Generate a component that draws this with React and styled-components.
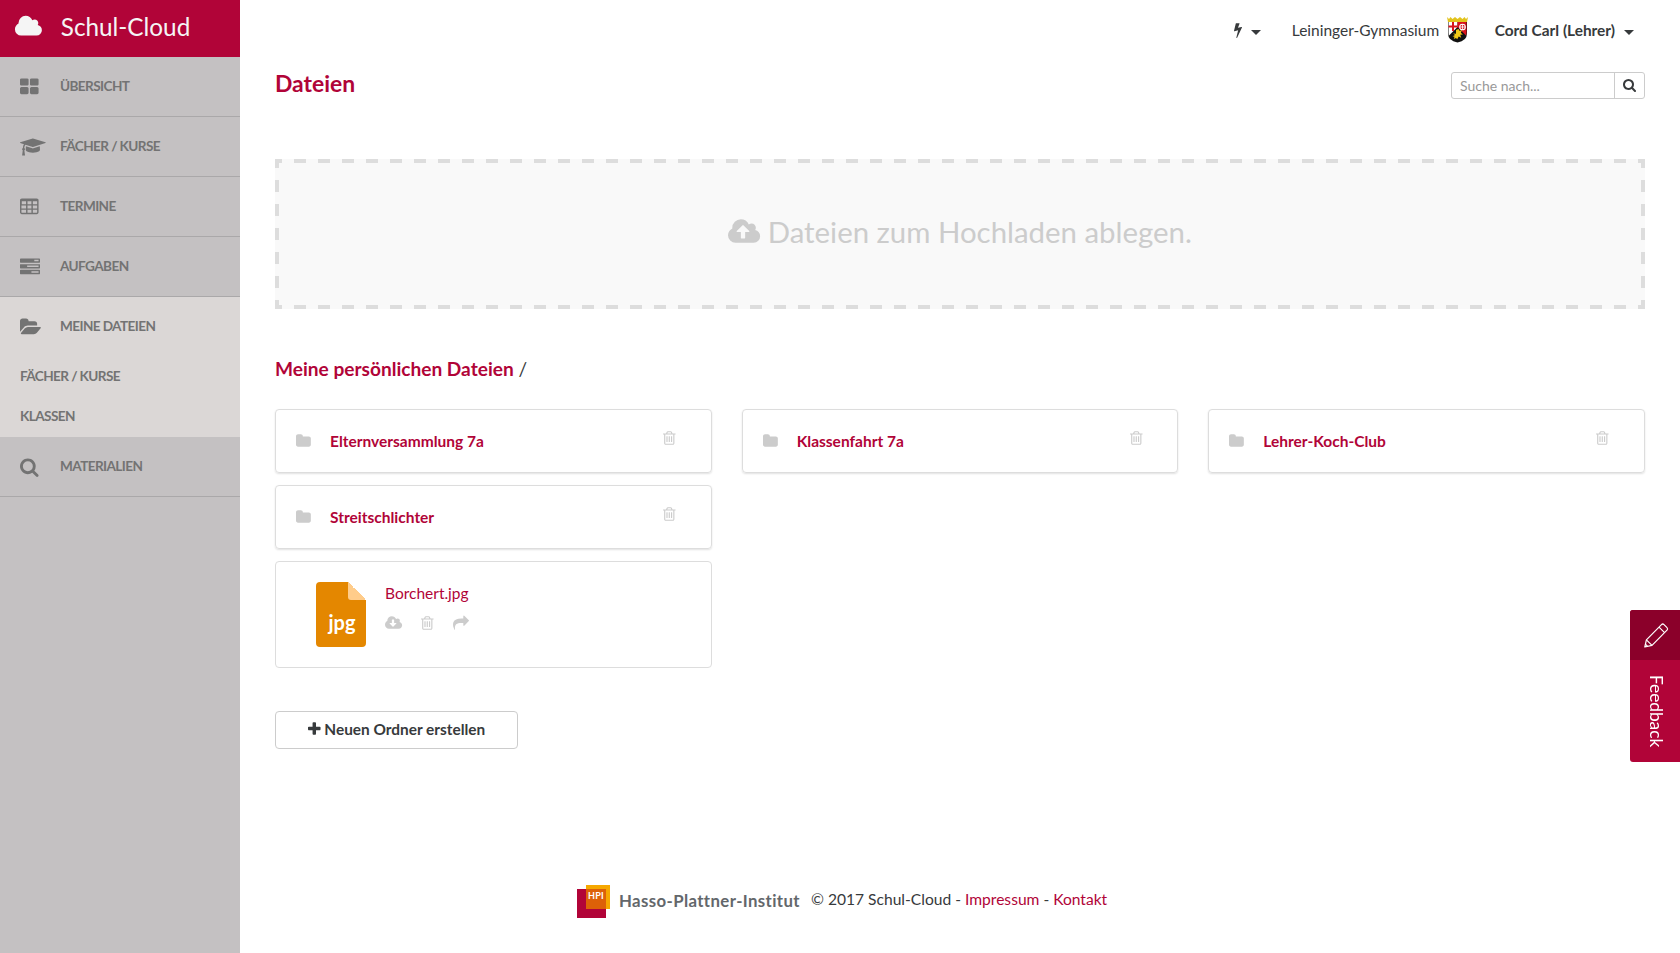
import React from 'react';
import styled, { createGlobalStyle, css } from 'styled-components';

const RED = '#b10438';
const INK = '#373a3c';

const Global = createGlobalStyle`
  * { box-sizing: border-box; }
  body { margin: 0; background: #fff; color: ${INK}; font-family: Lato, "Open Sans", sans-serif; font-size: 15.5px; }
  a { color: ${RED}; text-decoration: none; }
`;

const GLYPHS = {
  cloud: [0, 2048, 'M1984 1152q0 159-112.5 271.5t-271.5 112.5h-1088q-185 0-316.5-131.5t-131.5-316.5q0-132 71-241.5t187-163.5q-2-28-2-43 0-212 150-362t362-150q158 0 286.5 88t187.5 230q70-62 166-62 106 0 181 75t75 181q0 75-41 138 129 30 213 134.5t84 239.5z'],
  large: [64, 1664, 'M832 1024v384q0 52-38 90t-90 38h-512q-52 0-90-38t-38-90v-384q0-52 38-90t90-38h512q52 0 90 38t38 90zm0-768v384q0 52-38 90t-90 38h-512q-52 0-90-38t-38-90v-384q0-52 38-90t90-38h512q52 0 90 38t38 90zm896 768v384q0 52-38 90t-90 38h-512q-52 0-90-38t-38-90v-384q0-52 38-90t90-38h512q52 0 90 38t38 90zm0-768v384q0 52-38 90t-90 38h-512q-52 0-90-38t-38-90v-384q0-52 38-90t90-38h512q52 0 90 38t38 90z'],
  cap: [0, 2304, 'M1774 836l18 316q4 69-82 128t-235 93.5-323 34.5-323-34.5-235-93.5-82-128l18-316 574 181q22 7 48 7t48-7zm530-324q0 23-22 31l-1120 352q-4 1-10 1t-10-1l-652-206q-43 34-71 111.5t-34 178.5q63 36 63 109 0 69-58 107l58 433q2 14-8 25-9 11-24 11h-192q-15 0-24-11-10-11-8-25l58-433q-58-38-58-107 0-73 65-111 11-207 98-330l-333-104q-22-8-22-31t22-31l1120-352q4-1 10-1t10 1l1120 352q22 8 22 31z'],
  table: [64, 1664, 'M224 128h1344q66 0 113 47t47 113v1088q0 66-47 113t-113 47h-1344q-66 0-113-47t-47-113v-1088q0-66 47-113t113-47zM224 384v256h384v-256zM736 384v256h352v-256zM1216 384v256h384v-256zM192 768v256h416v-256zM736 768v256h352v-256zM1216 768v256h384v-256zM192 1152v224q0 32 32 32h384v-256zM736 1152v256h352v-256zM1216 1152v256h352q32 0 32-32v-224z'],
  tasks: [0, 1792, 'M1024 1408h640v-128h-640v128zm-384-512h1024v-128h-1024v128zm640-512h384v-128h-384v128zm512 832v256q0 26-19 45t-45 19h-1664q-26 0-45-19t-19-45v-256q0-26 19-45t45-19h1664q26 0 45 19t19 45zm0-512v256q0 26-19 45t-45 19h-1664q-26 0-45-19t-19-45v-256q0-26 19-45t45-19h1664q26 0 45 19t19 45zm0-512v256q0 26-19 45t-45 19h-1664q-26 0-45-19t-19-45v-256q0-26 19-45t45-19h1664q26 0 45 19t19 45z'],
  open: [0, 1920, 'M1879 952q0 31-31 66l-336 396q-43 51-120.5 86.5t-143.5 35.5h-1088q-34 0-60.5-13t-26.5-43q0-31 31-66l336-396q43-51 120.5-86.5t143.5-35.5h1088q34 0 60.5 13t26.5 43zm-343-344v160h-832q-94 0-197 47.5t-164 119.5l-337 396-5 6q0-4-.5-12.5t-.5-12.5v-960q0-92 66-158t158-66h320q92 0 158 66t66 158v32h544q92 0 158 66t66 158z'],
  search: [64, 1664, 'M1216 832q0-185-131.5-316.5t-316.5-131.5-316.5 131.5-131.5 316.5 131.5 316.5 316.5 131.5 316.5-131.5 131.5-316.5zm512 832q0 52-38 90t-90 38q-54 0-90-38l-343-342q-179 124-399 124-143 0-273.5-55.5t-225-150-150-225-55.5-273.5 55.5-273.5 150-225 225-150 273.5-55.5 273.5 55.5 225 150 150 225 55.5 273.5q0 220-124 399l343 343q37 37 37 90z'],
  bolt: [0, 896, 'M885 566q18 20 7 44l-540 1157q-13 25-42 25-4 0-14-2-17-5-25.5-19t-4.5-30l197-808-406 101q-4 1-12 1-18 0-31-11-18-15-13-39l201-825q4-14 16-23t28-9h328q19 0 32 12.5t13 29.5q0 8-5 18l-171 463 396-98q8-2 12-2 19 0 34 15z'],
  folder: [64, 1664, 'M1728 608v704q0 92-66 158t-158 66h-1216q-92 0-158-66t-66-158v-960q0-92 66-158t158-66h320q92 0 158 66t66 158v32h672q92 0 158 66t66 158z'],
  trash: [192, 1408, 'M704 736v576q0 14-9 23t-23 9h-64q-14 0-23-9t-9-23v-576q0-14 9-23t23-9h64q14 0 23 9t9 23zm256 0v576q0 14-9 23t-23 9h-64q-14 0-23-9t-9-23v-576q0-14 9-23t23-9h64q14 0 23 9t9 23zm256 0v576q0 14-9 23t-23 9h-64q-14 0-23-9t-9-23v-576q0-14 9-23t23-9h64q14 0 23 9t9 23zm128 724v-948h-896v948q0 22 7 40.5t14.5 27 10.5 8.5h832q3 0 10.5-8.5t14.5-27 7-40.5zm-672-1076h448l-48-117q-7-9-17-11h-317q-10 2-17 11zm928 32v64q0 14-9 23t-23 9h-96v948q0 83-47 143.5t-113 60.5h-832q-66 0-113-58.5t-47-141.5v-952h-96q-14 0-23-9t-9-23v-64q0-14 9-23t23-9h309l70-167q15-37 54-63t79-26h320q40 0 79 26t54 63l70 167h309q14 0 23 9t9 23z'],
  upload: [64, 1920, 'M1344 864q0-14-9-23l-352-352q-9-9-23-9t-23 9l-351 351q-10 12-10 24 0 14 9 23t23 9h224v352q0 13 9.5 22.5t22.5 9.5h192q13 0 22.5-9.5t9.5-22.5v-352h224q13 0 22.5-9.5t9.5-22.5zm640 288q0 159-112.5 271.5t-271.5 112.5h-1088q-185 0-316.5-131.5t-131.5-316.5q0-130 70-240t188-165q-2-30-2-43 0-212 150-362t362-150q156 0 285.5 87t188.5 231q71-62 166-62 106 0 181 75t75 181q0 76-41 138 130 31 213.5 135.5t83.5 238.5z'],
  download: [64, 1920, 'M1344 928q0-14-9-23t-23-9h-224v-352q0-13-9.5-22.5t-22.5-9.5h-192q-13 0-22.5 9.5t-9.5 22.5v352h-224q-13 0-22.5 9.5t-9.5 22.5q0 14 9 23l352 352q9 9 23 9t23-9l351-351q10-12 10-24zm640 224q0 159-112.5 271.5t-271.5 112.5h-1088q-185 0-316.5-131.5t-131.5-316.5q0-130 70-240t188-165q-2-30-2-43 0-212 150-362t362-150q156 0 285.5 87t188.5 231q71-62 166-62 106 0 181 75t75 181q0 76-41 138 130 31 213.5 135.5t83.5 238.5z'],
  share: [0, 1792, 'M1792 640q0 26-19 45l-512 512q-19 19-45 19t-45-19-19-45v-256h-224q-98 0-175.5 6t-154 21.5-133 42.5-105.5 69.5-80 101-48.5 138.5-17.5 181q0 55 5 123 0 6 2.5 23.5t2.5 26.5q0 15-8.5 25t-23.5 10q-16 0-28-17-7-9-13-22t-13.5-30-10.5-24q-127-285-127-451 0-199 53-333 162-403 875-403h224v-256q0-26 19-45t45-19 45 19l512 512q19 19 19 45z'],
  plus: [192, 1408, 'M1600 736v192q0 40-28 68t-68 28h-416v416q0 40-28 68t-68 28h-192q-40 0-68-28t-28-68v-416h-416q-40 0-68-28t-28-68v-192q0-40 28-68t68-28h416v-416q0-40 28-68t68-28h192q40 0 68 28t28 68v416h416q40 0 68 28t28 68z'],
};

const Svg = styled.svg`
  display: block;
  flex: none;
  overflow: visible;
`;

function Icon({ name, size = 16 }) {
  const [x, w, d] = GLYPHS[name];
  return (
    <Svg width={(w / 1792) * size} height={size} viewBox={`${x} 0 ${w} 1792`} fill="currentColor" aria-hidden="true">
      <path d={d} fillRule={name === 'table' ? 'evenodd' : 'nonzero'} />
    </Svg>
  );
}

const Shell = styled.div`
  display: flex;
  width: 1680px;
  height: 953px;
  overflow: hidden;
`;

const Sidebar = styled.nav`
  width: 240px;
  flex: none;
  background: #c4c1c2;
`;

const Brand = styled.div`
  height: 57px;
  padding: 0 0 3px 13.8px;
  display: flex;
  align-items: center;
  background: ${RED};
  color: #f5f5f5;
  font-size: 24.3px;
`;

const BrandName = styled.span`
  margin-left: 18.2px;
  padding-bottom: 1px;
`;

const navText = css`
  color: #737373;
  font-weight: 700;
  font-size: 13.6px;
  letter-spacing: -0.6px;
`;

const NavItem = styled.div`
  ${navText}
  height: 60px;
  padding-left: 20px;
  display: grid;
  grid-template-columns: 40px 1fr;
  align-items: center;
  border-bottom: 1px solid ${(p) => (p.$open ? 'transparent' : '#aaa8a9')};
`;

const NavLabel = styled.span`
  padding-bottom: 1px;
`;

const NavGroup = styled.div`
  background: #dbd7d6;
`;

const SubItem = styled.div`
  ${navText}
  height: 40px;
  padding: 0 20px 2px;
  display: flex;
  align-items: center;
`;

const Main = styled.div`
  flex: 1;
  padding: 0 35px;
  display: flex;
  flex-direction: column;
`;

const Topbar = styled.header`
  height: 61px;
  padding: 0 11px 1px 0;
  display: flex;
  align-items: center;
  justify-content: flex-end;
`;

const Caret = styled.span`
  margin: 4px 0 0 9px;
  border: 5px solid transparent;
  border-top-color: ${INK};
  border-bottom: 0;
`;

const School = styled.div`
  margin: 0 26.500px 0 31px;
  padding-bottom: 1px;
  display: flex;
  align-items: center;
  gap: 8px;
`;

const UserName = styled.span`
  font-weight: 700;
  font-size: 15.4px;
`;

const TitleRow = styled.div`
  height: 49px;
  display: flex;
  align-items: center;
  justify-content: space-between;
`;

const Title = styled.h1`
  margin: 0;
  padding-bottom: 5px;
  color: ${RED};
  font-size: 22.9px;
  line-height: 30px;
`;

const SearchBox = styled.div`
  width: 194px;
  height: 27px;
  display: flex;
  border: 1px solid #ccc;
  border-radius: 3px;
`;

const SearchField = styled.input`
  flex: 1;
  min-width: 0;
  border: 0;
  outline: 0;
  padding: 0 8px 1px;
  background: transparent;
  font: 14px Lato, sans-serif;
  &::placeholder { color: #999; opacity: 1; }
`;

const SearchButton = styled.button`
  width: 30px;
  padding: 0 0 1px;
  border: 0;
  border-left: 1px solid #ccc;
  background: none;
  color: ${INK};
  display: flex;
  align-items: center;
  justify-content: center;
`;

const DropZone = styled.section`
  height: 150px;
  margin-top: 49px;
  padding-bottom: 4px;
  display: flex;
  align-items: center;
  justify-content: center;
  gap: 7.500px;
  color: #ccc;
  font-size: 29.4px;
  background:
    linear-gradient(90deg, #ddd 50%, transparent 50%) -5px 0 / 24px 4px repeat-x,
    linear-gradient(90deg, #ddd 50%, transparent 50%) -5px 100% / 24px 4px repeat-x,
    linear-gradient(#ddd 50%, transparent 50%) 0 -3px / 4px 24px repeat-y,
    linear-gradient(#ddd 50%, transparent 50%) 100% -3px / 4px 24px repeat-y,
    #f9f9f9;
`;

const DropHint = styled.span`
  padding-bottom: 2px;
`;

const Breadcrumb = styled.h2`
  margin: 46px 0 0;
  font-size: 19.1px;
  line-height: 28px;
  font-weight: 400;
`;

const Crumb = styled.a`
  font-weight: 700;
`;

const Files = styled.div`
  margin-top: 26px;
  display: grid;
  grid-template-columns: repeat(3, 1fr);
  gap: 12px 30px;
`;

const Card = styled.div`
  height: 64px;
  padding: 0 35px 0 20px;
  border: 1px solid #ddd;
  border-radius: 4px;
  box-shadow: 0 1px 2px rgba(0, 0, 0, 0.12);
  display: grid;
  grid-template-columns: 34px 1fr auto;
  align-items: center;
  color: #ccc;
`;

const FolderName = styled.a`
  padding-bottom: 1px;
  font-weight: 700;
`;

const DeleteSlot = styled.span`
  padding-bottom: 6px;
`;

const FileCard = styled.div`
  grid-column: 1;
  height: 107px;
  padding: 20px 40px;
  border: 1px solid #ddd;
  border-radius: 4px;
  display: flex;
  gap: 19px;
`;

const FileBadge = styled.div`
  width: 50px;
  height: 65px;
  border-radius: 4px;
  background: #e48700;
  display: grid;
  grid-template-rows: 18px 1fr;
  color: #fff;
  font-weight: 700;
  font-size: 20px;
  line-height: 44px;
  text-align: center;
`;

const Fold = styled.span`
  justify-self: end;
  width: 18px;
  height: 18px;
  border-bottom-left-radius: 3px;
  background: linear-gradient(45deg, #ffcc8a 50%, #fff 50%);
`;

const FileExt = styled.span`
  padding-left: 2px;
`;

const FileInfo = styled.div`
  padding-top: 1px;
  line-height: 20px;
`;

const FileActions = styled.div`
  margin-top: 12px;
  display: flex;
  gap: 19px;
  color: #ccc;
`;

const CreateButton = styled.button`
  width: 243px;
  height: 38px;
  margin-top: 43px;
  padding: 0 0 2px;
  border: 1px solid #ccc;
  border-radius: 4px;
  background: #fff;
  color: ${INK};
  font: 700 15.4px Lato, sans-serif;
  display: flex;
  align-items: center;
  justify-content: center;
  gap: 4px;
`;

const Footer = styled.footer`
  margin: auto 0 34px;
  height: 34px;
  padding-left: 302px;
  display: flex;
  align-items: center;
`;

const Institute = styled.span`
  margin: 0 11px 0 9px;
  padding-bottom: 4px;
  color: #63676b;
  font-weight: 700;
  font-size: 16.8px;
  letter-spacing: 0.38px;
`;

const Copyright = styled.span`
  padding-bottom: 6px;
  font-size: 15.6px;
`;

const FeedbackTab = styled.aside`
  position: fixed;
  right: 0;
  top: 610px;
  width: 50px;
  height: 152px;
  border-radius: 3px 0 0 3px;
  overflow: hidden;
  background: ${RED};
  color: #fff;
  display: flex;
  flex-direction: column;
`;

const FeedbackIcon = styled.div`
  height: 50px;
  padding-left: 2px;
  display: flex;
  align-items: center;
  justify-content: center;
  background: #8b002a;
`;

const FeedbackLabel = styled.span`
  flex: 1;
  display: flex;
  align-items: center;
  justify-content: center;
  padding-left: 2px;
  writing-mode: vertical-rl;
  font-size: 17.3px;
`;

function Crest() {
  return (
    <Svg width="21" height="26" viewBox="0 0 21 26">
      <path d="M1 5h19v11q0 8-9.500 9.500Q1 24 1 16z" fill="#111" />
      <path d="M1.500 5h9v5L2 18.500q-.5-1.500-.5-3z" fill="#fff" />
      <path d="M10.500 5h9v11l-.5 2.500-8.500-8.500z" fill="#d8141c" />
      <path d="M5 5h2v3.500h3.500v2H7V14H5v-3.500H1.500v-2H5z" fill="#d8141c" />
      <circle cx="15.500" cy="10" r="2.800" fill="none" stroke="#fff" strokeWidth="1.100" />
      <path d="M12.700 10h5.600M15.500 7.200v5.600" stroke="#fff" strokeWidth=".8" />
      <path d="M0 0l2 2 1.500-2 2 2L8 0l2.500 2L13 0l2.500 2 2-2L19 2l2-2-1 5H1z" fill="#e2c31c" />
      <path d="M9 13l2.500-1 1.200 2 2.300-1-1.200 2.800 2 1.700-2.600.3 1 3-2.500-1.300-1.500 2.800-1.200-1.200-2.200 1 .7-2.300-2-.5 2.600-1.300L6 16.500l3 .3z" fill="#f0c818" />
    </Svg>
  );
}

function HpiLogo() {
  return (
    <Svg width="33" height="34" viewBox="0 0 33 34">
      <path d="M0 4h29v29H0z" fill={RED} />
      <path d="M9 0H33v24H9z" fill="#f6a800" />
      <path d="M9 4H29v20H9z" fill="#dd6108" />
      <text x="11" y="13.800" fill="#fff" fontFamily="Lato, sans-serif" fontWeight="700" fontSize="9" letterSpacing=".3">HPI</text>
    </Svg>
  );
}

function Pencil() {
  return (
    <Svg width="24" height="25" viewBox="0 0 24 25" fill="none" stroke="#fff" strokeWidth="1.200" strokeLinejoin="round">
      <path d="M.8 24l1.600-7.200L17.500 1.600q1.200-1.200 2.500 0l3 3q1.200 1.200 0 2.500L8 22.400z" />
      <path d="M2.400 16.800l5.600 5.600M15 4.100l5.600 5.600M1.400 21.200l2.200 2.200" />
    </Svg>
  );
}

const Folder = ({ name }) => (
  <Card>
    <Icon name="folder" />
    <FolderName>{name}</FolderName>
    <DeleteSlot><Icon name="trash" /></DeleteSlot>
  </Card>
);

const Nav = ({ icon, open, children }) => (
  <NavItem $open={open}>
    <Icon name={icon} size={20} />
    <NavLabel>{children}</NavLabel>
  </NavItem>
);

export default function App() {
  return (
    <Shell>
      <Global />
      <Sidebar>
        <Brand>
          <Icon name="cloud" size={25.2} />
          <BrandName>Schul-Cloud</BrandName>
        </Brand>
        <Nav icon="large">ÜBERSICHT</Nav>
        <Nav icon="cap">FÄCHER / KURSE</Nav>
        <Nav icon="table">TERMINE</Nav>
        <Nav icon="tasks">AUFGABEN</Nav>
        <NavGroup>
          <Nav icon="open" open>MEINE DATEIEN</Nav>
          <SubItem>FÄCHER / KURSE</SubItem>
          <SubItem>KLASSEN</SubItem>
        </NavGroup>
        <Nav icon="search">MATERIALIEN</Nav>
      </Sidebar>
      <Main>
        <Topbar>
          <Icon name="bolt" />
          <Caret />
          <School>Leininger-Gymnasium <Crest /></School>
          <UserName>Cord Carl (Lehrer)</UserName>
          <Caret />
        </Topbar>
        <TitleRow>
          <Title>Dateien</Title>
          <SearchBox>
            <SearchField placeholder="Suche nach..." />
            <SearchButton aria-label="Suche"><Icon name="search" size={14} /></SearchButton>
          </SearchBox>
        </TitleRow>
        <DropZone>
          <Icon name="upload" size={30} />
          <DropHint>Dateien zum Hochladen ablegen.</DropHint>
        </DropZone>
        <Breadcrumb><Crumb>Meine persönlichen Dateien</Crumb> /</Breadcrumb>
        <Files>
          <Folder name="Elternversammlung 7a" />
          <Folder name="Klassenfahrt 7a" />
          <Folder name="Lehrer-Koch-Club" />
          <Folder name="Streitschlichter" />
          <FileCard>
            <FileBadge><Fold /><FileExt>jpg</FileExt></FileBadge>
            <FileInfo>
              <a href="#datei">Borchert.jpg</a>
              <FileActions>
                <Icon name="download" />
                <Icon name="trash" />
                <Icon name="share" />
              </FileActions>
            </FileInfo>
          </FileCard>
        </Files>
        <CreateButton><Icon name="plus" />Neuen Ordner erstellen</CreateButton>
        <Footer>
          <HpiLogo />
          <Institute>Hasso-Plattner-Institut</Institute>
          <Copyright>
            © 2017 Schul-Cloud - <a href="#impressum">Impressum</a> - <a href="#kontakt">Kontakt</a>
          </Copyright>
        </Footer>
      </Main>
      <FeedbackTab>
        <FeedbackIcon><Pencil /></FeedbackIcon>
        <FeedbackLabel>Feedback</FeedbackLabel>
      </FeedbackTab>
    </Shell>
  );
}
